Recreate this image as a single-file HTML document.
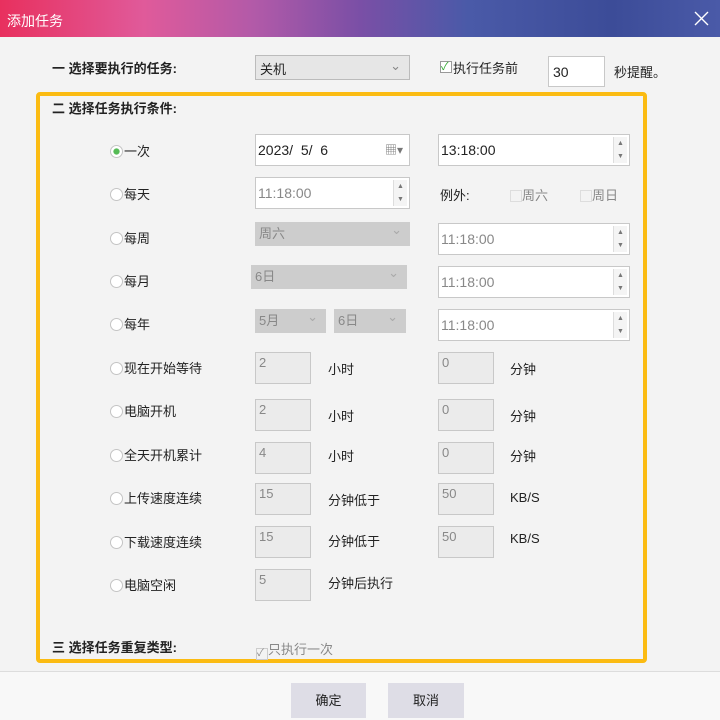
<!DOCTYPE html>
<html><head><meta charset="utf-8"><style>
*{box-sizing:border-box;margin:0;padding:0}
body{width:720px;height:720px;overflow:hidden;background:#f3f3f3;font-family:"Liberation Sans","Noto Sans CJK SC",sans-serif;font-size:13px;color:#222;position:relative}
.a{position:absolute}
.title{left:0;top:0;width:720px;height:37px;background:linear-gradient(90deg,#e8305e 0%,#e05a9a 20%,#b35aa8 35%,#7a4fa6 50%,#4a5aa8 65%,#3c4c98 85%,#4a5aa8 100%);color:#fff;font-size:14px}
.bold{font-weight:bold}
.box{border:4px solid #fbbb12;border-radius:4px;left:36px;top:92px;width:611px;height:571px}
.in{background:#fff;border:1px solid #c8c8c8;padding:0 0 0 2px;line-height:30px;font-size:14px}
.gi{background:#ebebeb;border:1px solid #c8c8c8;color:#888;font-size:13px;padding:2px 3px}
.sel{background:#cdcdcd;color:#888;padding:0 4px;font-size:13px;line-height:24px}
.sel::after{content:"⌄";position:absolute;right:8px;top:-4px;color:#aaa}
.rad{width:13px;height:13px;border:1px solid #c4c4c4;border-radius:50%;background:#fff;display:inline-block;margin-right:1px;vertical-align:-2px}
.sp{position:absolute;right:2px;top:2px;width:14px;bottom:2px;border-left:1px solid #ddd;background:#f4f4f4;font-size:7px;color:#777;text-align:center;line-height:13px}
.dis{color:#888}
.btn{background:#dedde6;text-align:center;line-height:35px;font-size:13px;width:75px;height:35px;top:683px}
</style></head><body>
<div class="a title"><span class="a" style="left:7px;top:11px">添加任务</span><svg class="a" style="left:694px;top:11px" width="15" height="15"><path d="M1 1L14 14M14 1L1 14" stroke="#fff" stroke-width="1.4"/></svg></div>
<div class="a bold" style="left:52px;top:58px">一 选择要执行的任务:</div>
<div class="a" style="left:255px;top:55px;width:155px;height:25px;background:#e6e6e6;border:1px solid #bbb;padding:3px 4px;font-size:13px">关机<span class="a" style="right:8px;top:2px;color:#888">⌄</span></div>
<div class="a" style="left:440px;top:61px;width:12px;height:12px;border:1px solid #999;background:#fff;color:#3a3;font-size:11px;line-height:10px">✓</div>
<div class="a" style="left:453px;top:58px">执行任务前</div>
<div class="a in" style="left:548px;top:56px;width:57px;height:31px;padding-left:4px">30</div>
<div class="a" style="left:614px;top:62px">秒提醒。</div>
<div class="a box"></div>
<div class="a bold" style="left:52px;top:98px">二 选择任务执行条件:</div>
<div class="a" style="left:110px;top:141px"><span class="rad" style="background:radial-gradient(#5b5 35%,#fff 45%)"></span>一次</div>
<div class="a" style="left:110px;top:184px"><span class="rad"></span>每天</div>
<div class="a" style="left:110px;top:228px"><span class="rad"></span>每周</div>
<div class="a" style="left:110px;top:271px"><span class="rad"></span>每月</div>
<div class="a" style="left:110px;top:314px"><span class="rad"></span>每年</div>
<div class="a" style="left:110px;top:358px"><span class="rad"></span>现在开始等待</div>
<div class="a" style="left:110px;top:401px"><span class="rad"></span>电脑开机</div>
<div class="a" style="left:110px;top:445px"><span class="rad"></span>全天开机累计</div>
<div class="a" style="left:110px;top:488px"><span class="rad"></span>上传速度连续</div>
<div class="a" style="left:110px;top:532px"><span class="rad"></span>下载速度连续</div>
<div class="a" style="left:110px;top:575px"><span class="rad"></span>电脑空闲</div>
<div class="a in" style="left:255px;top:134px;width:155px;height:32px">2023/&nbsp; 5/&nbsp; 6<span class="a" style="right:6px;top:0;color:#777;font-size:12px">▦▾</span></div>
<div class="a in" style="left:438px;top:134px;width:192px;height:32px">13:18:00<div class="sp">▲<br>▼</div></div>
<div class="a in dis" style="left:255px;top:177px;width:155px;height:32px">11:18:00<div class="sp">▲<br>▼</div></div>
<div class="a" style="left:440px;top:185px">例外:</div>
<div class="a dis" style="left:510px;top:185px"><span style="display:inline-block;width:12px;height:12px;border:1px solid #ddd;vertical-align:-2px"></span>周六</div>
<div class="a dis" style="left:580px;top:185px"><span style="display:inline-block;width:12px;height:12px;border:1px solid #ddd;vertical-align:-2px"></span>周日</div>
<div class="a sel" style="left:255px;top:222px;width:155px;height:24px">周六</div>
<div class="a in dis" style="left:438px;top:223px;width:192px;height:32px">11:18:00<div class="sp">▲<br>▼</div></div>
<div class="a sel" style="left:251px;top:265px;width:156px;height:24px">6日</div>
<div class="a in dis" style="left:438px;top:266px;width:192px;height:32px">11:18:00<div class="sp">▲<br>▼</div></div>
<div class="a sel" style="left:255px;top:309px;width:71px;height:24px">5月</div>
<div class="a sel" style="left:334px;top:309px;width:72px;height:24px">6日</div>
<div class="a in dis" style="left:438px;top:309px;width:192px;height:32px">11:18:00<div class="sp">▲<br>▼</div></div>
<div class="a gi" style="left:255px;top:352px;width:56px;height:32px">2</div><div class="a" style="left:328px;top:359px">小时</div>
<div class="a gi" style="left:438px;top:352px;width:56px;height:32px">0</div><div class="a" style="left:510px;top:359px">分钟</div>
<div class="a gi" style="left:255px;top:399px;width:56px;height:32px">2</div><div class="a" style="left:328px;top:406px">小时</div>
<div class="a gi" style="left:438px;top:399px;width:56px;height:32px">0</div><div class="a" style="left:510px;top:406px">分钟</div>
<div class="a gi" style="left:255px;top:442px;width:56px;height:32px">4</div><div class="a" style="left:328px;top:446px">小时</div>
<div class="a gi" style="left:438px;top:442px;width:56px;height:32px">0</div><div class="a" style="left:510px;top:446px">分钟</div>
<div class="a gi" style="left:255px;top:483px;width:56px;height:32px">15</div><div class="a" style="left:328px;top:490px">分钟低于</div>
<div class="a gi" style="left:438px;top:483px;width:56px;height:32px">50</div><div class="a" style="left:510px;top:490px">KB/S</div>
<div class="a gi" style="left:255px;top:526px;width:56px;height:32px">15</div><div class="a" style="left:328px;top:531px">分钟低于</div>
<div class="a gi" style="left:438px;top:526px;width:56px;height:32px">50</div><div class="a" style="left:510px;top:531px">KB/S</div>
<div class="a gi" style="left:255px;top:569px;width:56px;height:32px">5</div><div class="a" style="left:328px;top:573px">分钟后执行</div>
<div class="a bold" style="left:52px;top:637px">三 选择任务重复类型:</div>
<div class="a dis" style="left:256px;top:639px"><span style="display:inline-block;width:12px;height:12px;border:1px solid #ccc;font-size:10px;line-height:10px;vertical-align:-2px">✓</span>只执行一次</div>
<div class="a" style="left:0;top:671px;width:720px;height:49px;background:#f8f8f8;border-top:1px solid #ddd"></div>
<div class="a btn" style="left:291px">确定</div>
<div class="a btn" style="left:388px;width:76px">取消</div>
</body></html>
